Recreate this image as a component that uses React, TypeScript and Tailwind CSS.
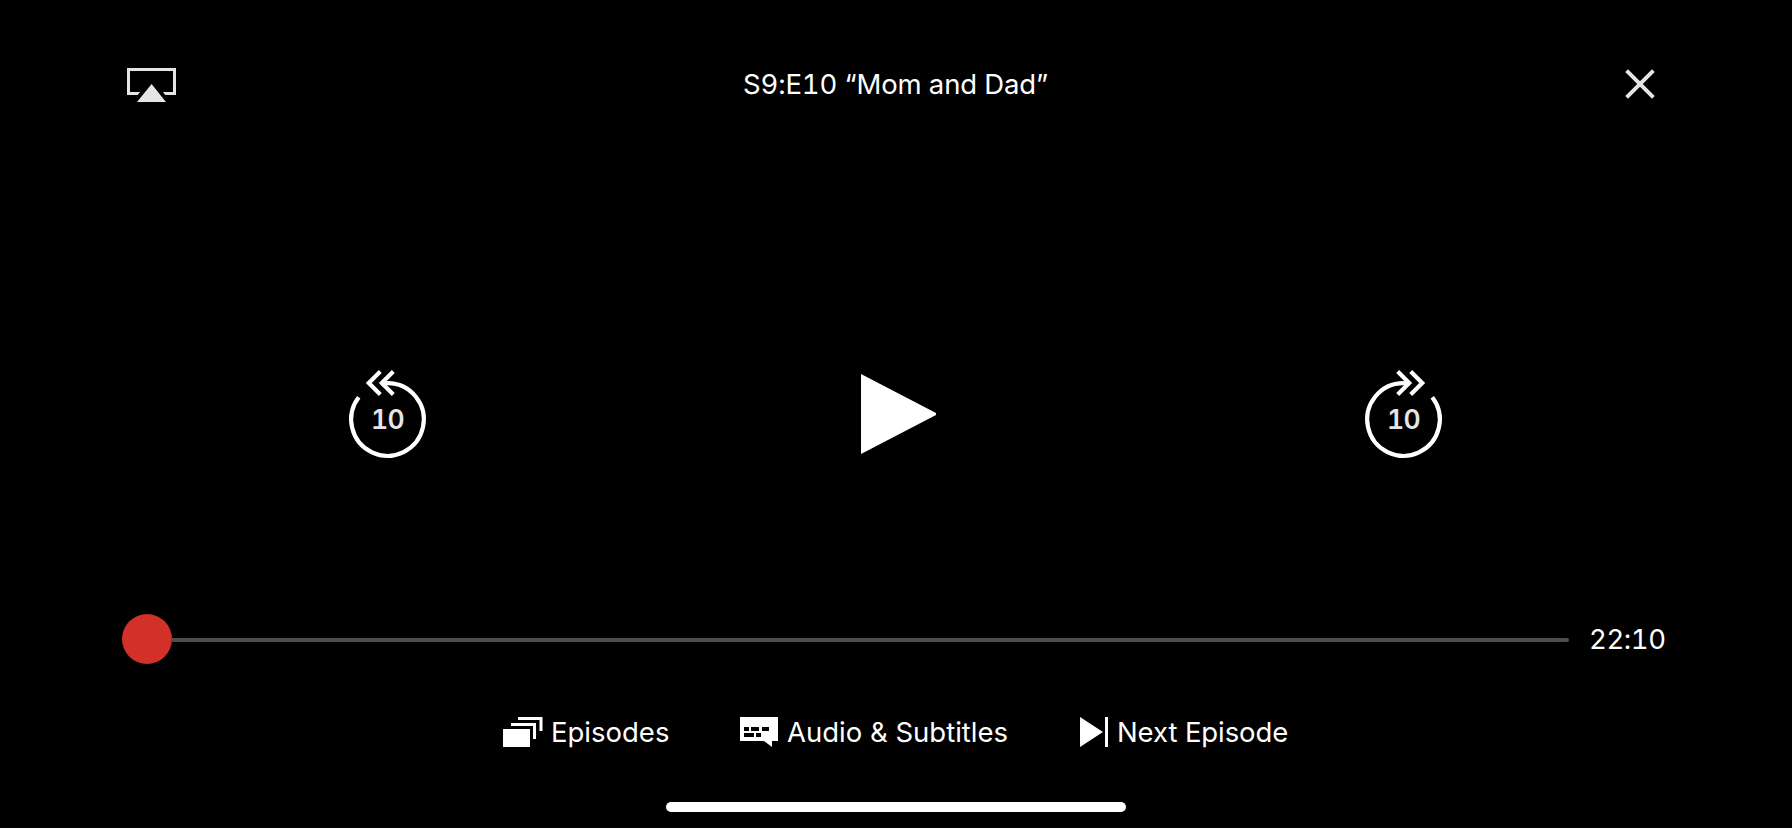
import React from "react";

function AirPlayIcon() {
  return (
    <svg className="block h-9 w-[49px]" viewBox="0 0 49 36" fill="none">
      <path d="M13.6 25.5H1.5V1.5H47.5V25.5H35.4" stroke="#e5e5e5" strokeWidth="3" />
      <path d="M24.5 11L8 30H41Z" fill="#000" />
      <path d="M24.6 16L39 34H10Z" fill="#e5e5e5" />
    </svg>
  );
}

function CloseIcon() {
  return (
    <svg className="block size-[30px]" viewBox="0 0 30 30" fill="none">
      <path
        d="M1.6 1.6L28.4 28.4M28.4 1.6L1.6 28.4"
        stroke="#e5e5e5"
        strokeWidth="4"
      />
    </svg>
  );
}

function SkipButton({ forward = false }: { forward?: boolean }) {
  return (
    <button
      aria-label={forward ? "Forward 10 seconds" : "Rewind 10 seconds"}
      className="relative h-[88px] w-[77px]"
    >
      <svg
        className={
          forward
            ? "block h-[88px] w-[77px] -scale-x-100 overflow-visible"
            : "block h-[88px] w-[77px] overflow-visible"
        }
        viewBox="0 0 77 88"
        fill="none"
        stroke="#fff"
        strokeWidth="4.2"
      >
        <path d="M9.76 27.32A36.3 36.3 0 1 0 38.5 13.2H32" />
        <path d="M31.3 1.6L19.8 13L31.3 24.4" />
        <path d="M44.3 1.6L32.8 13L44.3 24.4" />
      </svg>
      <span className="absolute inset-x-0 top-[31px] text-center text-[26.5px] leading-9 font-semibold tracking-[-0.6px] text-[#e5e5e5] tabular-nums">
        10
      </span>
    </button>
  );
}

function EpisodesIcon() {
  return (
    <svg className="block h-[30px] w-10 shrink-0" viewBox="0 0 40 30" fill="#fff">
      <path d="M0 12H27V30H0Z" />
      <path d="M8 6H33V22H30V9H8Z" />
      <path d="M15 0H39.5V14H36.5V3H15Z" />
    </svg>
  );
}

function SubtitlesIcon() {
  return (
    <svg className="block h-[30px] w-[38px] shrink-0" viewBox="0 0 38 30">
      <path d="M0 0H38V24H32V30L24 24H0Z" fill="#fff" />
      <path d="M4 10h5v4H4ZM11 10h8v4h-8ZM22 10h7v4h-7ZM4 16h10v4H4ZM16 16h5v4h-5Z" fill="#000" />
    </svg>
  );
}

function NextIcon() {
  return (
    <svg className="block h-[30px] w-7 shrink-0" viewBox="0 0 28 30" fill="#fff">
      <path d="M0 0L23 15L0 30ZM25 0H28V30H25Z" />
    </svg>
  );
}

export default function App() {
  return (
    <main className="flex h-[828px] w-full flex-col overflow-hidden bg-black font-['Inter',sans-serif] text-white">
      <header className="grid grid-cols-[1fr_auto_1fr] items-center pt-[66px] pr-[137px] pl-[127px]">
        <button aria-label="AirPlay" className="mt-[2px] -mb-[2px] justify-self-start">
          <AirPlayIcon />
        </button>
        <h1 className="ml-[9px] text-[27.5px] leading-9 tracking-[-0.12px] whitespace-nowrap tabular-nums">
          S9:E10 “Mom and Dad”
        </h1>
        <button aria-label="Close" className="justify-self-end">
          <CloseIcon />
        </button>
      </header>

      <section className="flex items-center justify-between pt-[268px] pr-[350px] pl-[349px]">
        <SkipButton />
        <button aria-label="Play" className="mr-[-6px]">
          <svg className="block h-20 w-[75px]" viewBox="0 0 75 80" fill="#fff">
            <path d="M0 0L75 39V41L0 80Z" />
          </svg>
        </button>
        <SkipButton forward />
      </section>

      <section className="flex items-center pt-[156px] pl-[122px]">
        <div className="size-[50px] shrink-0 rounded-full bg-[#d23029]" />
        <div className="mt-[2px] h-1 w-[1397px] shrink-0 rounded-r-sm bg-[#4d4d4d]" />
        <time className="ml-[20px] text-[27.5px] leading-9 tracking-[-0.4px] tabular-nums">22:10</time>
      </section>

      <nav className="mt-[53px] flex h-[30px] items-center pl-[503px]">
        <button className="flex w-[237px] items-center gap-2">
          <EpisodesIcon />
          <span className="text-[27.5px] leading-8 whitespace-nowrap">Episodes</span>
        </button>
        <button className="flex w-[340px] items-center gap-[9px]">
          <SubtitlesIcon />
          <span className="text-[27.5px] leading-8 whitespace-nowrap">Audio &amp; Subtitles</span>
        </button>
        <button className="flex items-center gap-[9px]">
          <NextIcon />
          <span className="text-[27.5px] leading-8 tracking-[-0.1px] whitespace-nowrap">
            Next Episode
          </span>
        </button>
      </nav>

      <div className="mt-[55px] ml-[666px] h-[10px] w-[460px] shrink-0 rounded-full bg-white" />
    </main>
  );
}
